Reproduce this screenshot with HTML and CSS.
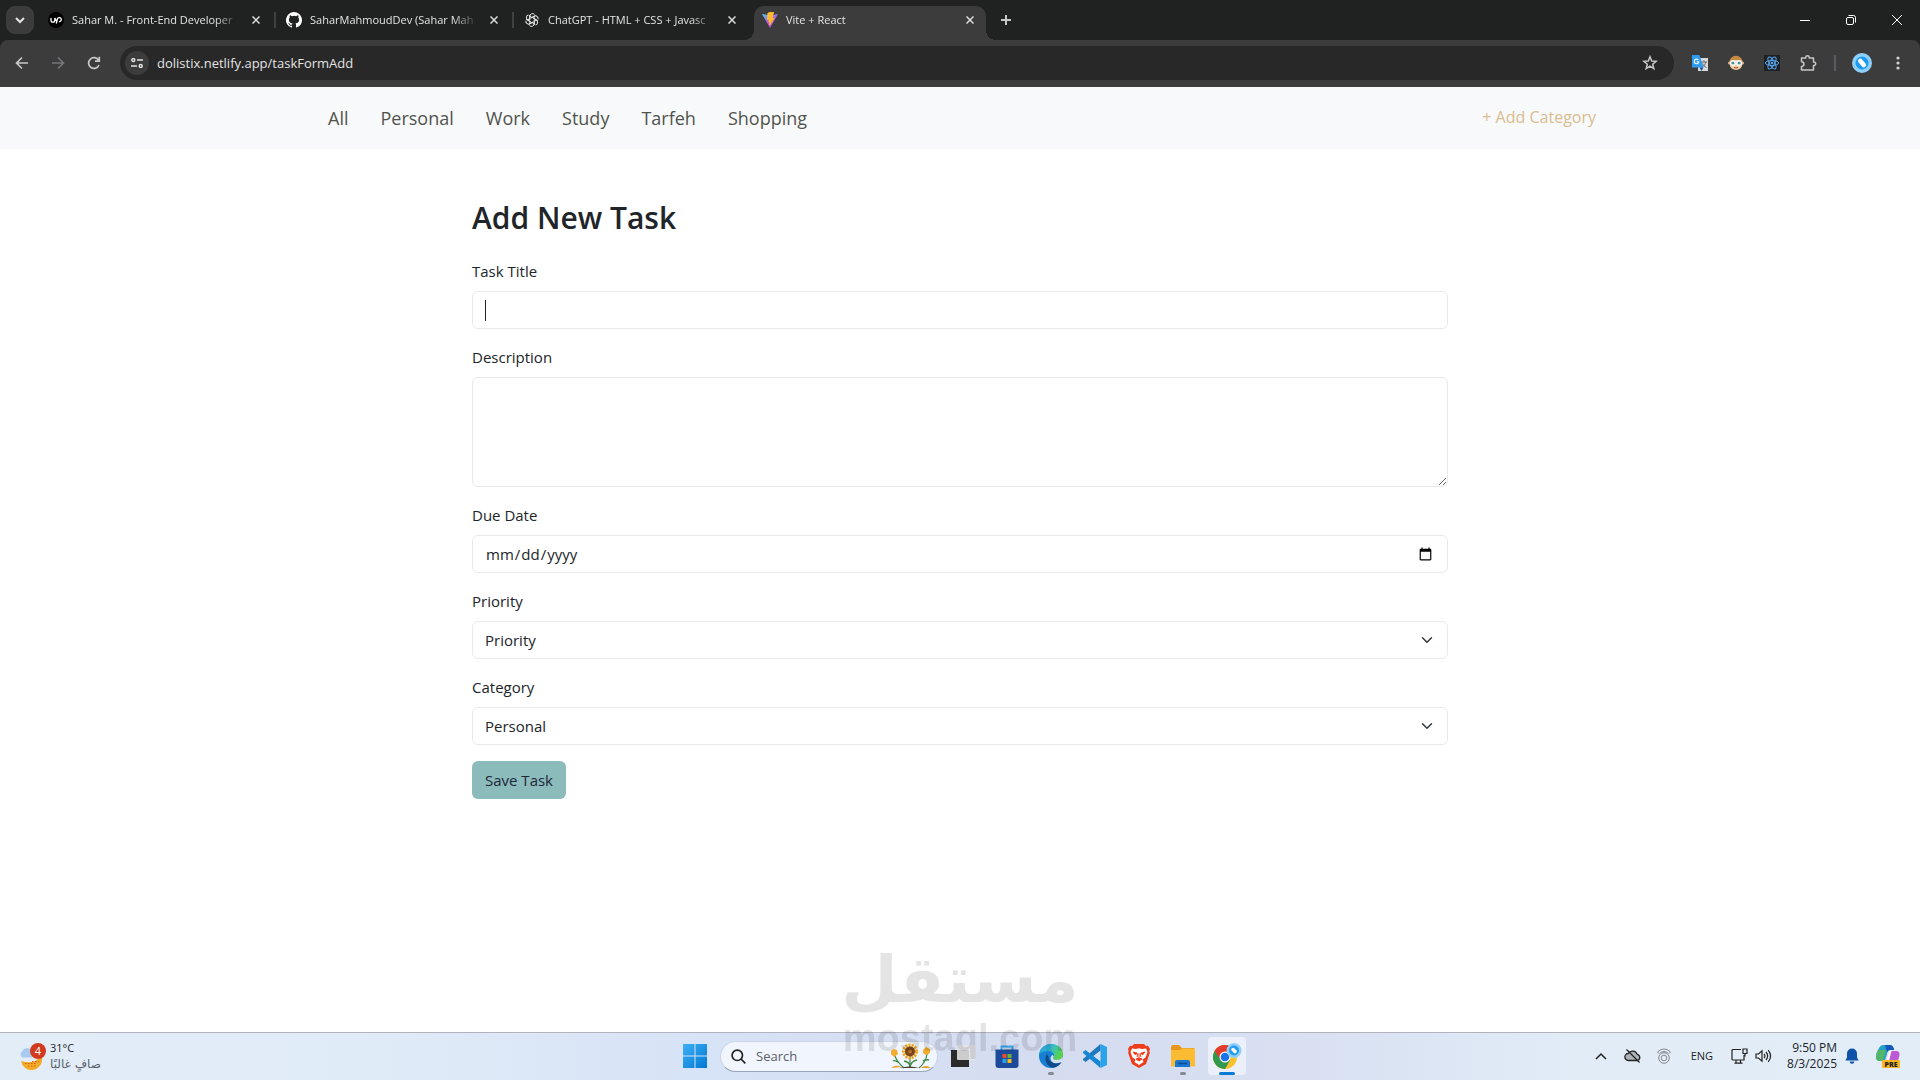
FILE: index.html
```html
<!DOCTYPE html>
<html lang="en">
<head>
  <meta charset="UTF-8">
  <meta name="viewport" content="width=device-width, initial-scale=1.0">
  <title>Vite + React</title>
  <link rel="stylesheet" href="styles.css">
</head>
<body>
  <!-- browser window -->
  <header class="browser">
    <div class="tab-strip">
      <button class="tab-search" aria-label="Search tabs">
        <svg width="10" height="10" viewBox="0 0 10 10" fill="none" stroke="#e3e3e3" stroke-width="2"><path d="M1 3l4 4 4-4"/></svg>
      </button>
      <div class="tab">
        <svg class="favicon" viewBox="0 0 16 16"><circle cx="8" cy="8" r="8" fill="#000"/><path d="M3 6v2.200a1.900 1.900 0 0 0 3.800 0V6c.6 1.800 1.500 3 2.600 3.300M8.300 11.500l1-4a2 2 0 1 1 1.600 2.100" fill="none" stroke="#fff" stroke-width="1.300"/></svg>
        <span class="tab-title">Sahar M. - Front-End Developer</span>
        <button class="tab-close" aria-label="Close tab"><svg width="8" height="8" viewBox="0 0 8 8"><path d="M0.500 0.500l7 7M7.500 0.500l-7 7"/></svg></button>
      </div>
      <div class="tab">
        <svg class="favicon" viewBox="0 0 16 16"><path fill="#fff" d="M8 0a8 8 0 0 0-2.530 15.590c.4.070.55-.17.55-.38v-1.490c-2.230.49-2.690-.94-2.690-.94-.37-.93-.9-1.180-.9-1.180-.72-.5.06-.49.06-.49.8.060 1.230.83 1.230.83.71 1.220 1.870.87 2.330.66.070-.51.280-.87.510-1.070-1.780-.2-3.640-.89-3.640-3.950 0-.87.310-1.590.82-2.150-.080-.2-.36-1.020.080-2.120 0 0 .67-.21 2.200.82a7.600 7.600 0 0 1 4 0c1.530-1.040 2.200-.82 2.200-.82.440 1.100.160 1.920.080 2.120.51.560.82 1.270.82 2.150 0 3.070-1.870 3.750-3.650 3.950.29.250.54.730.54 1.480v2.200c0 .21.150.46.550.38A8 8 0 0 0 8 0z"/></svg>
        <span class="tab-title">SaharMahmoudDev (Sahar Mah</span>
        <button class="tab-close" aria-label="Close tab"><svg width="8" height="8" viewBox="0 0 8 8"><path d="M0.500 0.500l7 7M7.500 0.500l-7 7"/></svg></button>
      </div>
      <div class="tab">
        <svg class="favicon" viewBox="0 0 16 16" fill="none" stroke="#e8e8e8" stroke-width="1">
          <g id="petal"><path d="M5.800 8V4.200a2.700 2.700 0 0 1 4.700-1.700M5.800 4.200L8 5.500l3.200-1.900"/></g>
          <use href="#petal" transform="rotate(60 8 8)"/>
          <use href="#petal" transform="rotate(120 8 8)"/>
          <use href="#petal" transform="rotate(180 8 8)"/>
          <use href="#petal" transform="rotate(240 8 8)"/>
          <use href="#petal" transform="rotate(300 8 8)"/>
        </svg>
        <span class="tab-title">ChatGPT - HTML + CSS + Javasc</span>
        <button class="tab-close" aria-label="Close tab"><svg width="8" height="8" viewBox="0 0 8 8"><path d="M0.500 0.500l7 7M7.500 0.500l-7 7"/></svg></button>
      </div>
      <div class="tab active">
        <svg class="favicon" viewBox="0 0 16 16">
          <defs><linearGradient id="vite" x1="0" y1="0" x2="0.600" y2="1"><stop offset="0" stop-color="#41d1ff"/><stop offset="0.600" stop-color="#bd54de"/></linearGradient></defs>
          <path d="M0 2l8 14 8-14-7 1.500z" fill="url(#vite)"/><path d="M11.500 0L6 1l-.5 6.500 1.800-.4-.5 3 1.500-.4-.8 3.300L12 6.400l-2 .4L11.500 0z" fill="#ffb92a" stroke="#ffb92a"/>
        </svg>
        <span class="tab-title">Vite + React</span>
        <button class="tab-close" aria-label="Close tab"><svg width="8" height="8" viewBox="0 0 8 8"><path d="M0.500 0.500l7 7M7.500 0.500l-7 7"/></svg></button>
      </div>
      <button class="new-tab" aria-label="New tab">
        <svg width="10" height="10" viewBox="0 0 10 10" stroke="#c7c7c7" stroke-width="2"><path d="M5 0v10M0 5h10"/></svg>
      </button>
      <div class="window-buttons">
        <button aria-label="Minimize"><svg width="10" height="10" viewBox="0 0 10 10" fill="none" stroke="#fff"><path d="M0 5.500h10"/></svg></button>
        <button aria-label="Restore"><svg width="10" height="10" viewBox="0 0 10 10" fill="none" stroke="#fff"><rect x="0.500" y="2.500" width="7" height="7" rx="1.500"/><path d="M2.500 .5H7.500a2 2 0 0 1 2 2v5"/></svg></button>
        <button aria-label="Close"><svg width="10" height="10" viewBox="0 0 10 10" fill="none" stroke="#fff"><path d="M0 0l10 10M10 0L0 10"/></svg></button>
      </div>
    </div>

    <div class="toolbar">
      <button class="tool" aria-label="Back"><svg width="14" height="14" viewBox="0 0 14 14" fill="none" stroke="#c7c7c7" stroke-width="1.700"><path d="M13 7H2M7 1.500L1.500 7 7 12.500"/></svg></button>
      <button class="tool" aria-label="Forward"><svg width="14" height="14" viewBox="0 0 14 14" fill="none" stroke="#76767a" stroke-width="1.700"><path d="M1 7h11M7 1.500L12.500 7 7 12.500"/></svg></button>
      <button class="tool" aria-label="Reload"><svg width="14" height="14" viewBox="0 0 14 14" fill="none" stroke="#c7c7c7" stroke-width="1.700"><path d="M12 9a5.400 5.400 0 1 1-.3-4.600M12.300 0.800v4.400H8"/></svg></button>
      <div class="omnibox">
        <button class="site-info" aria-label="View site information"><svg width="12" height="10" viewBox="0 0 12 10" fill="none" stroke="#e3e3e3" stroke-width="1.400"><circle cx="2.300" cy="2" r="1.500"/><path d="M6 2h6M0 8h6"/><circle cx="9.700" cy="8" r="1.500"/></svg></button>
        <input class="url" type="text" aria-label="Address" value="dolistix.netlify.app/taskFormAdd">
        <button class="star" aria-label="Bookmark this tab"><svg width="16" height="16" viewBox="0 0 16 16" fill="none" stroke="#c7c7c7" stroke-width="1.500"><path d="M8 1.800l1.700 4.200 4.500.3-3.500 2.900 1.100 4.400L8 11.200l-3.800 2.400 1.100-4.400L1.800 6.300l4.500-.3z"/></svg></button>
      </div>
      <div class="extensions">
        <button class="tool" aria-label="Google Translate"><svg width="16" height="16" viewBox="0 0 16 16"><rect x="6" y="3" width="10" height="13" fill="#d8d8d8"/><path d="M9 7h6M12 5.500V7M10 12c2-1 3.500-3 3.800-5M10.500 8.500c.5 1.500 2 3 4 4" stroke="#666" fill="none"/><path d="M0 0h7.500l4 12.500H0z" fill="#2d9bf0"/><path d="M7.500 12.500h4L9.500 16z" fill="#1553a8"/><path d="M6.300 5A2.300 2.300 0 1 0 6.800 6.800H4.700" fill="none" stroke="#fff" stroke-width="1.100"/></svg></button>
        <button class="tool" aria-label="JSON extension"><svg width="16" height="16" viewBox="0 0 16 16"><circle cx="8" cy="7.500" r="6.700" fill="#c98a45"/><circle cx="1.500" cy="8" r="1.500" fill="#e6b58a"/><circle cx="14.500" cy="8" r="1.500" fill="#e6b58a"/><ellipse cx="8" cy="10" rx="6" ry="5" fill="#efcfa6"/><circle cx="4.900" cy="8" r="2.900" fill="#fff"/><circle cx="11.100" cy="8" r="2.900" fill="#fff"/><circle cx="4.900" cy="8" r="1.500" fill="#4c8a92"/><circle cx="11.100" cy="8" r="1.500" fill="#4c8a92"/><path d="M6 12.500q2 1 4 0" stroke="#b73a30" fill="none"/></svg></button>
        <button class="tool" aria-label="React Developer Tools"><svg width="16" height="16" viewBox="0 0 16 16"><rect width="16" height="16" fill="#1f2024"/><g fill="none" stroke="#58a8ee" stroke-width="1"><ellipse cx="8" cy="8" rx="6.600" ry="2.600"/><ellipse cx="8" cy="8" rx="6.600" ry="2.600" transform="rotate(60 8 8)"/><ellipse cx="8" cy="8" rx="6.600" ry="2.600" transform="rotate(120 8 8)"/></g><circle cx="8" cy="8" r="1.300" fill="#58a8ee"/></svg></button>
        <button class="tool" aria-label="Extensions"><svg width="17" height="17" viewBox="0 0 17 17" fill="none" stroke="#c7c7c7" stroke-width="1.500" stroke-linejoin="round"><path d="M1.500 3H5.800V2.500a1.700 1.700 0 0 1 3.400 0V3H13.500V7h.5a1.700 1.700 0 0 1 0 3.400h-.5V15H1.500V11.500a2.400 2.400 0 0 0 0-4.800z"/></svg></button>
        <span class="divider"></span>
        <button class="tool profile" aria-label="Profile"><svg width="20" height="20" viewBox="0 0 20 20"><circle cx="10" cy="10" r="10" fill="#8fd0fb"/><circle cx="10" cy="10" r="6.500" fill="#1e9bf0"/><path d="M8.300 8l3.500 4" stroke="#fff" stroke-width="4.500" stroke-linecap="round"/></svg></button>
        <button class="tool" aria-label="Menu"><svg width="4" height="16" viewBox="0 0 4 16" fill="#d0d0d0"><circle cx="2" cy="3" r="1.600"/><circle cx="2" cy="8" r="1.600"/><circle cx="2" cy="13" r="1.600"/></svg></button>
      </div>
    </div>
  </header>

  <!-- page -->
  <nav class="categories">
    <div class="categories-inner">
      <ul class="category-list">
        <li><a href="#all">All</a></li>
        <li><a href="#personal">Personal</a></li>
        <li><a href="#work">Work</a></li>
        <li><a href="#study">Study</a></li>
        <li><a href="#tarfeh">Tarfeh</a></li>
        <li><a href="#shopping">Shopping</a></li>
      </ul>
      <button class="add-category">+ Add Category</button>
    </div>
  </nav>

  <main class="page">
    <h2>Add New Task</h2>
    <form>
      <div class="field">
        <label for="title">Task Title</label>
        <input class="form-control title-input" type="text" id="title">
      </div>
      <div class="field">
        <label for="description">Description</label>
        <textarea class="form-control" id="description" rows="4"></textarea>
      </div>
      <div class="field">
        <label for="dueDate">Due Date</label>
        <input class="form-control" type="date" id="dueDate">
      </div>
      <div class="field">
        <label for="priority">Priority</label>
        <select class="form-control form-select" id="priority">
          <option>Priority</option>
        </select>
      </div>
      <div class="field">
        <label for="category">Category</label>
        <select class="form-control form-select" id="category">
          <option>Personal</option>
          <option>Work</option>
          <option>Study</option>
          <option>Tarfeh</option>
          <option>Shopping</option>
        </select>
      </div>
      <button class="save" type="button">Save Task</button>
    </form>
  </main>

  <!-- taskbar -->
  <footer class="taskbar">
    <button class="weather">
      <svg width="27" height="27" viewBox="0 0 27 27"><path d="M2 18a10.500 10.500 0 0 0 21-3l-2-2c-2 5-9 8-19 5z" fill="#f3ac25"/><path d="M6 20.500h12M9 23h8M13 18.500h7" stroke="#e2561f" stroke-width="1.200" stroke-dasharray="1.500 1.500"/><path d="M3.500 14.500a3.500 3.500 0 0 1-.5-6 5 5 0 0 1 9-1l1 7z" fill="#a9c9ef"/><circle cx="19" cy="8" r="8" fill="#d13a1e"/><text x="19" y="12" text-anchor="middle" class="badge-count">4</text></svg>
      <span class="weather-text">
        <span>31°C</span>
        <span class="weather-state" lang="ar" dir="rtl">صافٍ غالبًا</span>
      </span>
    </button>

    <div class="apps">
      <button class="app" aria-label="Start"><svg width="24" height="24" viewBox="0 0 24 24"><defs><linearGradient id="win" x1="0" y1="0" x2="1" y2="1"><stop offset="0" stop-color="#3fb0f5"/><stop offset="1" stop-color="#0078d4"/></linearGradient></defs><path fill="url(#win)" d="M0 0h11.500v11.500H0zM12.500 0H24v11.500H12.500zM0 12.500h11.500V24H0zM12.500 12.500H24V24H12.500z"/></svg></button>
      <div class="search">
        <svg width="15" height="15" viewBox="0 0 15 15" fill="none" stroke="#222" stroke-width="1.700"><circle cx="6.300" cy="6.300" r="5.200"/><path d="M10 10l4.300 4.300"/></svg>
        <input type="text" aria-label="Search" placeholder="Search">
        <svg width="42" height="26" viewBox="0 0 42 26"><path d="M20 12v13M5 13q2 6 9 12M37 11q-1 8-8 14" stroke="#3d8a46" stroke-width="1.200" fill="none"/><path d="M14 18q6 1 6 6M27 17q-6 1-7 7M8 19q-4-2-5-1M33 18q4-2 6-1" stroke="#3d8a46" stroke-width="1.500" fill="none"/><circle cx="20" cy="8.500" r="6.200" fill="none" stroke="#f0a51e" stroke-width="3.600" stroke-dasharray="2 1"/><circle cx="20" cy="8.500" r="5" fill="#7a4518"/><circle cx="20" cy="8.500" r="2" fill="#b87131"/><path d="M1 8l3-2 3 1 1 4-4 3-3-3zM33 7l3-3 4 2v4l-4 2-3-2z" fill="#f3ac2b"/><path d="M1 25q5-4 10-1zM31 25q5-4 10 0z" fill="#ee9b24"/><path d="M9 25q11-3 20 0z" fill="#4b4036"/></svg>
      </div>
      <button class="app" aria-label="Task view"><svg width="24" height="24" viewBox="0 0 24 24"><rect y="6" width="18" height="17" fill="#2a2a2a"/><rect x="6" y="1" width="18" height="15" rx="1" fill="#e9e9e9" fill-opacity=".85"/></svg></button>
      <button class="app" aria-label="Microsoft Store"><svg width="24" height="24" viewBox="0 0 24 24"><path d="M6.500 7V2.500h11V7" fill="none" stroke="#32a4ee" stroke-width="2"/><path d="M.5 5.500h23V21a3 3 0 0 1-3 3h-17a3 3 0 0 1-3-3z" fill="#1d4a9a"/><path d="M7.500 10h4v4h-4z" fill="#f04a2c"/><path d="M12.500 10h4v4h-4z" fill="#6bb536"/><path d="M7.500 15h4v4h-4z" fill="#29a0ec"/><path d="M12.500 15h4v4h-4z" fill="#fbbb19"/></svg></button>
      <button class="app running" aria-label="Microsoft Edge"><svg width="24" height="24" viewBox="0 0 24 24"><defs><linearGradient id="edge" x1="0" y1="0" x2="1" y2=".4"><stop offset="0" stop-color="#1b93d8"/><stop offset=".5" stop-color="#35bdd5"/><stop offset="1" stop-color="#5ad24c"/></linearGradient></defs><circle cx="12" cy="12" r="12" fill="#1580d4"/><path d="M0 11C1 4 6 0 12 0c7 0 12 4.500 12 10 0 4-3 6-6.500 6-3 0-4-1.500-3-3 1.500-3-1-6-5-6-5 0-8 2-9.500 4z" fill="url(#edge)"/><path d="M8 10c-4 5 0 13 6 13.800 4-.5 7-3 8.500-6C16 21 9 18 9.500 12z" fill="#114a8b"/><path d="M14.500 13c-1 1.500 0 3 3 3 3 0 5-1 6.300-3.500V18l-1.800.2c-5 2.500-10 .8-10.500-3.700.3-2 1-3 2-3.500 1 .5 1.300 1.300 1 2z" fill="#d7def0"/></svg></button>
      <button class="app" aria-label="Visual Studio Code"><svg width="24" height="24" viewBox="0 0 24 24"><path d="M17.500 0L24 3v18l-6.500 3z" fill="#2ba3ec"/><path d="M17.500 0v6.500L2.500 18 0 16v-1z" fill="#1d78bd"/><path d="M17.500 24v-6.500L2.500 6 0 8v1z" fill="#1687d2"/></svg></button>
      <button class="app" aria-label="Brave"><svg width="22" height="24" viewBox="0 0 22 24"><path d="M6 0h10l2 2 2-.3L22 5l-.7 2 .5 2L18 20l-7 4-7-4L.2 9l.5-2L0 5l2-3.300L4 2z" fill="#ee3d1c"/><path d="M4 4.500l4 .5 3-.7 3 .7 4-.5 1.500 3.500-2 5.500-3 2 1 2.500L11 21l-4.500-3 1-2.500-3-2-2-5.500z" fill="#fff"/><path d="M5 8l4 1-1.500 2zM17 8l-4 1 1.500 2zM11 10v4M8 15l3-1 3 1-3 2zM10 9l-1 4M12 9l1 4" fill="#ee3d1c" stroke="#ee3d1c"/></svg></button>
      <button class="app running" aria-label="File Explorer"><svg width="24" height="24" viewBox="0 0 24 24"><path d="M0 3a2 2 0 0 1 2-2h6l3 3h11a2 2 0 0 1 2 2v16H0z" fill="#e8971c"/><path d="M0 6h9l2-1.500h13V22.500H0z" fill="#fbbc33"/><path d="M4 23v-5a2 2 0 0 1 2-2h11a2 2 0 0 1 2 2v5z" fill="#1976d2"/><path d="M7 19.500h9" stroke="#114a8b" stroke-width="1.500"/></svg></button>
      <button class="app current" aria-label="Google Chrome"><svg width="30" height="26" viewBox="0 0 30 26"><circle cx="13" cy="14" r="12" fill="#f9c22e"/><path d="M13 14L2.600 8A12 12 0 0 1 23.400 8z" fill="#e53b2c"/><path d="M2.600 8A12 12 0 0 0 13 26l5.200-9L13 14z" fill="#31984c"/><path d="M13 8.500h10.700A12 12 0 0 0 2.600 8l5.600 8z" fill="#e53b2c"/><circle cx="13" cy="14" r="5.500" fill="#fff"/><circle cx="13" cy="14" r="4.300" fill="#1a73e8"/><circle cx="22" cy="7.500" r="7.500" fill="#8fd0fb"/><circle cx="22" cy="7.500" r="5" fill="#249bec"/><path d="M21 6.500l2 2" stroke="#fff" stroke-width="3.500" stroke-linecap="round"/></svg></button>
    </div>

    <div class="tray">
      <button aria-label="Show hidden icons"><svg width="12" height="8" viewBox="0 0 12 8" fill="none" stroke="#222" stroke-width="1.500"><path d="M1 7l5-5 5 5"/></svg></button>
      <button class="tray-cloud" aria-label="OneDrive"><svg width="18" height="14" viewBox="0 0 18 14" fill="#b0b3b8" stroke="#222" stroke-width="1.300"><path d="M4.500 11.500a3.500 3.500 0 0 1-.3-7 5 5 0 0 1 9 .8 3.200 3.200 0 0 1 .3 6.200z"/><path d="M2.500 0.500l13 13"/></svg></button>
      <button class="tray-camera" aria-label="Camera"><svg width="14" height="16" viewBox="0 0 14 16" fill="none" stroke="#85898e" stroke-width="1"><circle cx="7" cy="10" r="5.300"/><circle cx="7" cy="10" r="2.800"/><path d="M1 5.500V3.500Q7-1.500 13 3.500v2M2.500 5.500Q7 1.500 11.500 5.500"/></svg></button>
      <button class="language">ENG</button>
      <button class="quick" aria-label="Network and volume">
        <svg width="17" height="16" viewBox="0 0 17 16" fill="none" stroke="#222" stroke-width="1.200"><path d="M10 1.500H2a1 1 0 0 0-1 1v8.500a1 1 0 0 0 1 1h11V7M5 12v3M9.500 12v3M3.500 15.200h8"/><path d="M12 1h4v4.500h-4zM14 5.500v2.500h-1"/></svg>
        <svg width="17" height="14" viewBox="0 0 17 14" fill="none" stroke="#222" stroke-width="1.200"><path d="M1 5h2.500L7 1.800v10.400L3.500 9H1z"/><path d="M9 4.800q1.800 2.200 0 4.400M11 3q3.300 4 0 8M13.200 1.200q4.800 5.800 0 11.600"/></svg>
      </button>
      <button class="clock"><span>9:50 PM</span><span>8/3/2025</span></button>
      <button class="bell" aria-label="Notifications"><svg width="14" height="16" viewBox="0 0 14 16" fill="#0b52a8"><path d="M7 0.500a5 5 0 0 0-5 5V9.500L0.300 12.500h13.400L12 9.500V5.500a5 5 0 0 0-5-5zM4.700 13.500h4.600a2.300 2.300 0 0 1-4.600 0z"/></svg></button>
      <button class="copilot" aria-label="Copilot"><svg width="24" height="24" viewBox="0 0 24 24"><path d="M7 1h7q2.500 0 3.500 3l.7 2h-4q-2 0-2.600 2L9.500 15q-.6 2-2.500 2H4q-4 0-4-4 0-4 3-9 1.500-3 4-3z" fill="#24a0c8"/><path d="M0 13q0-4 2-7h8l-2.500 9q-.5 2-2.500 2H4q-4 0-4-4z" fill="#53b567"/><path d="M9 1h5q2.500 0 3.500 3l.7 2h-4Q12 6 11 8z" fill="#1557b8"/><path d="M14 7h6q4 0 3.500 4L22 17H10l2-7q.6-3 2-3z" fill="#bd58d6"/><path d="M13 7l-3 10h3l2.500-10z" fill="#fff"/><rect x="6" y="16" width="18" height="8" rx="1" fill="#f9b522"/><text x="15" y="23" text-anchor="middle" class="pre">PRE</text></svg></button>
    </div>
  </footer>

  <div class="watermark" aria-hidden="true">
    <span class="watermark-ar" lang="ar" dir="rtl">مستقل</span>
    <span class="watermark-en">mostaql.com</span>
  </div>
</body>
</html>
```

FILE: styles.css
```css
* {
  box-sizing: border-box;
}
body {
  margin: 0;
  min-height: 100vh;
  display: flex;
  flex-direction: column;
  position: relative;
  font-family: "Open Sans", "Noto Sans", sans-serif;
  font-size: 15px;
  line-height: 24px;
  color: #212529;
  background-color: #fff;
}
button, input, select, textarea {
  font: inherit;
  color: inherit;
}
button {
  display: flex;
  align-items: center;
  justify-content: center;
  padding: 0;
  border: none;
  background: none;
  cursor: pointer;
}
svg {
  display: block;
  flex-shrink: 0;
}

/* browser */
.browser {
  background-color: #202221;
  color: #e3e3e3;
}
.tab-strip {
  display: flex;
  align-items: center;
  height: 40px;
  padding-left: 6px;
}
.tab-search {
  width: 28px;
  height: 28px;
  margin-right: 4px;
  border-radius: 9px;
  background-color: #3c3c3c;
}
.tab {
  position: relative;
  display: flex;
  align-items: center;
  flex: 0 1 238px;
  min-width: 0;
  height: 28px;
  padding: 0 12px 0 10px;
  font-size: 11px;
}
.tab:not(.active)::after {
  content: "";
  position: absolute;
  right: 0;
  top: 6px;
  width: 2px;
  height: 16px;
  background-color: #3f4140;
}
.tab:nth-child(4)::after {
  display: none;
}
.favicon {
  width: 16px;
  height: 16px;
  margin-right: 8px;
}
.tab-title {
  flex: 1;
  min-width: 0;
  overflow: hidden;
  white-space: nowrap;
  margin-right: 8px;
  -webkit-mask-image: linear-gradient(to right, #000 85%, transparent);
  mask-image: linear-gradient(to right, #000 85%, transparent);
}
.tab-close {
  width: 16px;
  height: 16px;
}
.tab-close path {
  stroke: #dcdcdc;
  stroke-width: 1.5;
}
.tab.active {
  align-self: flex-end;
  height: 34px;
  padding-bottom: 6px;
}
.tab.active::before {
  content: "";
  position: absolute;
  left: -8px;
  right: -6px;
  top: 0;
  bottom: 0;
  background:
    radial-gradient(circle at 0 0, transparent 10px, #3c3c3c 10px) left bottom / 10px 10px no-repeat,
    radial-gradient(circle at 100% 0, transparent 10px, #3c3c3c 10px) right bottom / 10px 10px no-repeat;
}
.tab.active::after {
  content: "";
  position: absolute;
  left: 2px;
  right: 4px;
  top: 0;
  bottom: 0;
  border-radius: 10px 10px 0 0;
  background-color: #3c3c3c;
}
.tab.active > * {
  z-index: 1;
}
.new-tab {
  width: 28px;
  height: 28px;
  margin-left: 2px;
}
.window-buttons {
  display: flex;
  margin-left: auto;
}
.window-buttons button {
  width: 46px;
  height: 40px;
}
.toolbar {
  display: flex;
  align-items: center;
  height: 47px;
  padding: 0 4px 1px;
  border-radius: 8px 8px 0 0;
  background-color: #3c3c3c;
}
.tool {
  width: 36px;
  height: 34px;
}
.omnibox {
  display: flex;
  align-items: center;
  flex: 1;
  min-width: 0;
  height: 34px;
  margin-left: 8px;
  padding: 0 12px 0 5px;
  border-radius: 17px;
  background-color: #282828;
}
.site-info {
  width: 24px;
  height: 24px;
  border-radius: 50%;
  background-color: #3c3c3c;
}
.url {
  flex: 1;
  min-width: 0;
  padding: 0 8px;
  border: none;
  outline: none;
  background: none;
  font-size: 13px;
}
.star {
  width: 24px;
  height: 24px;
}
.extensions {
  display: flex;
  align-items: center;
  margin-left: 8px;
}
.divider {
  width: 2px;
  height: 16px;
  margin: 0 8px;
  background-color: #5a5a60;
}

/* category bar */
.categories {
  background-color: #f8f9fb;
}
.categories-inner {
  display: flex;
  justify-content: space-between;
  align-items: flex-start;
  max-width: 1296px;
  margin: 0 auto;
  padding: 10px 0;
}
.category-list {
  display: flex;
  margin: 0;
  padding: 0;
  list-style: none;
}
.category-list a {
  display: block;
  padding: 6px 16px;
  font-size: 18px;
  line-height: 30px;
  color: #50544c;
  text-decoration: none;
}
.add-category {
  padding: 8px 12px;
  font-size: 16px;
  color: #d9bd8e;
}

/* task form */
.page {
  flex: 1;
  width: 100%;
  max-width: 976px;
  margin: 0 auto;
  padding: 48px 0;
}
h2 {
  margin: 0 0 20px;
  font-size: 30px;
  line-height: 42px;
  font-weight: 600;
}
.field {
  margin-bottom: 16px;
}
.field label {
  display: block;
  margin-bottom: 8px;
}
.form-control {
  display: block;
  width: 100%;
  height: 38px;
  padding: 6px 12px;
  border: 1px solid #e9e9ed;
  border-radius: 6px;
  outline: none;
  background-color: #fff;
}
textarea.form-control {
  height: 110px;
  resize: vertical;
}
.title-input {
  background: linear-gradient(#212529, #212529) 12px 8px / 1px 21px no-repeat;
}
.form-select {
  appearance: none;
  background: url("data:image/svg+xml,%3Csvg xmlns='http://www.w3.org/2000/svg' viewBox='0 0 16 16'%3E%3Cpath fill='none' stroke='%23343a40' stroke-linecap='round' stroke-linejoin='round' stroke-width='2' d='m2 5 6 6 6-6'/%3E%3C/svg%3E") right 12px center / 16px 12px no-repeat;
}
.save {
  height: 38px;
  padding: 0 13px;
  border-radius: 6px;
  color: #20273b;
  background-color: #8bbbba;
}

/* taskbar */
.taskbar {
  display: grid;
  grid-template-columns: 1fr auto 1fr;
  align-items: center;
  height: 48px;
  padding-bottom: 1px;
  border-top: 1px solid #b0b4bd;
  background: linear-gradient(to right, #e2edf8 0%, #e0ebf8 20%, #d6e2f6 38%, #d5dcf0 55%, #d8e0f2 68%, #e2ecf7 82%, #e3edf7 100%);
  font-size: 11px;
  line-height: 16px;
}
.weather {
  justify-self: start;
  margin-left: 19px;
  gap: 4px;
  text-align: left;
}
.weather-text {
  display: flex;
  flex-direction: column;
}
.weather-state {
  font-family: "DejaVu Sans", sans-serif;
  font-size: 12px;
  color: #5b6068;
}
.badge-count {
  font-size: 11px;
  fill: #fff;
}
.apps {
  display: flex;
  align-items: center;
  gap: 6px;
  margin-left: 2px;
}
.app {
  position: relative;
  width: 38px;
  height: 38px;
  border-radius: 4px;
}
.running::after, .current::after {
  content: "";
  position: absolute;
  left: 16px;
  bottom: 0;
  width: 6px;
  height: 3px;
  border-radius: 2px;
  background-color: #858a92;
}
.current {
  background-color: #ebf0fa;
}
.current::after {
  left: 11px;
  width: 16px;
  background-color: #0a7bd6;
}
.search {
  display: flex;
  align-items: center;
  width: 218px;
  height: 31px;
  padding: 0 5px 0 10px;
  border: 1px solid #ccd5e8;
  border-bottom-color: #9aa5b8;
  border-radius: 16px;
  background-color: #f1f5fd;
}
.search input {
  flex: 1;
  min-width: 0;
  padding: 0 10px;
  border: none;
  outline: none;
  background: none;
  font-size: 13px;
}
.search input::placeholder {
  color: #5c6068;
}
.tray {
  display: flex;
  align-items: center;
  justify-self: end;
  margin-right: 20px;
}
.tray-cloud {
  margin-left: 17px;
}
.tray-camera {
  margin-left: 15px;
}
.language {
  margin-left: 20px;
}
.quick {
  gap: 7px;
  margin-left: 18px;
}
.clock {
  flex-direction: column;
  align-items: flex-end;
  margin-left: 15px;
  font-size: 12px;
}
.bell {
  margin-left: 8px;
}
.copilot {
  margin-left: 17px;
}
.pre {
  font-size: 7px;
  font-weight: 800;
  fill: #222;
}

/* watermark lies over the page and the taskbar */
.watermark {
  position: absolute;
  left: 0;
  right: 0;
  bottom: 20px;
  display: flex;
  flex-direction: column;
  align-items: center;
  color: #000;
  opacity: 0.1;
  pointer-events: none;
}
.watermark-ar {
  font: bold 65px/72px "DejaVu Sans", sans-serif;
}
.watermark-en {
  font: bold 38px/44px "Liberation Sans", Arial, sans-serif;
}
```
